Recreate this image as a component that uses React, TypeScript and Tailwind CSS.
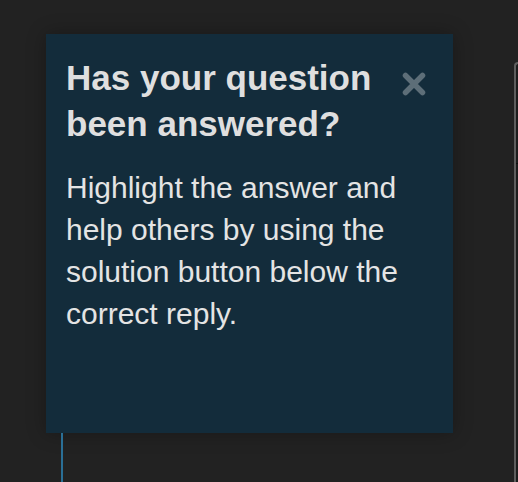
const panelText = {
  title: "Has your question been answered?",
  body: "Highlight the answer and help others by using the solution button below the correct reply.",
};

function CloseIcon() {
  return (
    <svg width="24" height="24" viewBox="0 0 24 24" fill="none" aria-hidden="true">
      <path
        d="M3.5 3.5 L20.5 20.5 M20.5 3.5 L3.5 20.5"
        stroke="#5d6e78"
        strokeWidth="5.5"
        strokeLinecap="round"
      />
    </svg>
  );
}

export default function App() {
  return (
    <div className="flex h-[482px] w-[518px] overflow-hidden bg-[#222222] font-['Liberation_Sans',Arial,sans-serif]">
      <div className="flex w-[514px] shrink-0 flex-col pl-[46px] pt-[34px]">
        <section className="h-[399px] w-[407px] shrink-0 bg-[#132c3b] pl-[20px] pr-[20px] pt-[21px] shadow-[0_0_18px_rgba(0,0,0,0.3)]">
          <div className="flex items-start justify-between">
            <h2 className="max-w-[320px] text-[35px] font-bold leading-[46px] text-[#dfdfdf]">
              {panelText.title}
            </h2>
            <button type="button" className="mr-[7px] mt-[17px]">
              <CloseIcon />
            </button>
          </div>
          <p className="mt-[20px] text-[30px] leading-[42px] text-[#e4e4e4]">
            {panelText.body}
          </p>
        </section>
        <div className="ml-[15px] w-[2px] flex-1 bg-[#2a6f96]" />
      </div>

      <div className="mt-[62px] flex-1 rounded-tl-[8px] border-l-2 border-t-2 border-[#5e5e5e] bg-[#1d1d1d]">
        <div className="h-[100px] border-b border-[#0e0e0e]" />
      </div>
    </div>
  );
}
